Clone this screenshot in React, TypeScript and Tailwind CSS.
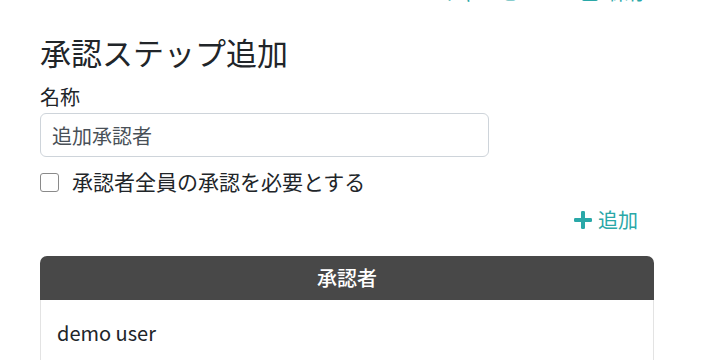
import React from 'react';

const font = { fontFamily: '"Noto Sans CJK JP", "Noto Sans", sans-serif' };

const App = () => {
  return (
    <div className="w-[710px] h-[360px] overflow-hidden bg-white text-[#212529]" style={font}>
      <div className="pt-px pl-[40px] w-[654px]">
        <div className="flex justify-end items-center gap-[44px] -mt-[23px] h-[28px] text-[20px] text-[#2aa8a8] pr-[6px]">
          <span>キャンセル</span>
          <span className="flex items-center gap-[10px]">
            <span className="inline-block w-[16px] h-[18px] bg-[#2aa8a8] rounded-[2px]" />
            保存
          </span>
        </div>

        <h2 className="mt-[27px] text-[31px] leading-[38px] font-normal text-[#212529]">承認ステップ追加</h2>

        <label className="block mt-[14px] text-[20px] leading-[24px]">名称</label>
        <input
          type="text"
          defaultValue="追加承認者"
          className="mt-[4px] w-[449px] h-[44px] px-[11px] text-[20px] text-[#495057] border border-[#ced4da] rounded-[6px] outline-none"
          style={font}
        />

        <label className="mt-[11px] flex items-center h-[28px] text-[21px]">
          <span className="w-[19px] h-[19px] border-[1.5px] border-[#8a8a8a] rounded-[3px] bg-white" />
          <span className="ml-[13px]">承認者全員の承認を必要とする</span>
        </label>

        <div className="mt-[10px] flex justify-end pr-[16px]">
          <button className="flex items-center gap-[6px] h-[28px] text-[20px] text-[#2aa8a8]" style={font}>
            <svg width="18" height="18" viewBox="0 0 18 18">
              <rect x="7" y="0" width="4" height="18" rx="1.2" fill="#2aa8a8" />
              <rect x="0" y="7" width="18" height="4" rx="1.2" fill="#2aa8a8" />
            </svg>
            追加
          </button>
        </div>

        <div className="mt-[22px] w-[614px]">
          <div className="h-[44px] flex items-center justify-center bg-[#484848] rounded-t-[7px] text-white text-[20px] font-medium">
            承認者
          </div>
          <div className="h-[80px] border-x border-[#e3e3e3] px-[16px] pt-[18px] text-[20px] leading-[30px]">
            demo user
          </div>
        </div>
      </div>
    </div>
  );
};

export default App;
